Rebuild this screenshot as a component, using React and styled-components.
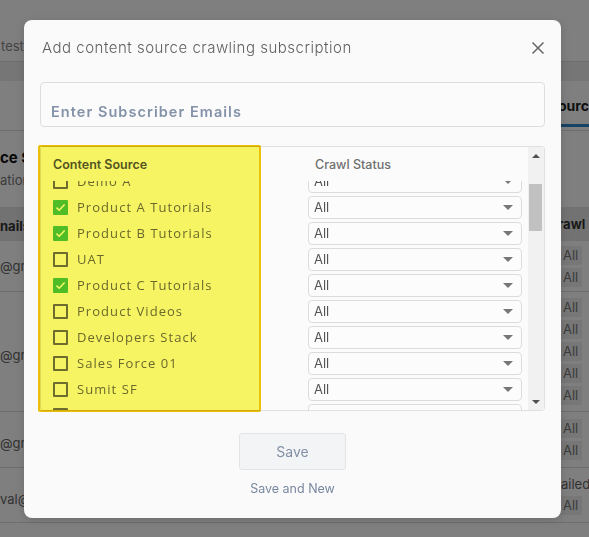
import React, { useLayoutEffect, useRef } from "react";
import styled, { createGlobalStyle } from "styled-components";

const GlobalStyle = createGlobalStyle`
  html, body { margin: 0; padding: 0; width: 100%; height: 100%; overflow: hidden; }
  body { font-family: Inter, "Open Sans", "Liberation Sans", sans-serif; background: #fff; }
  * { box-sizing: border-box; }
`;

/* ---------- background page ---------- */
const Page = styled.div`
  width: 589px;
  height: 537px;
  background: #fff;
  display: flex;
  flex-direction: column;
  overflow: hidden;
`;

const BgRow = styled.div`
  flex: 0 0 ${(p) => p.$h}px;
  display: flex;
  justify-content: space-between;
  background: ${(p) => (p.$band ? p.$band : "transparent")};
  border-bottom: ${(p) => (p.$line ? "1px solid #dcdcdc" : "none")};
`;

const LeftCell = styled.div`
  width: 60px;
  overflow: hidden;
  display: flex;
  flex-direction: column;
  justify-content: center;
  gap: 4px;
  white-space: nowrap;
  padding-top: ${(p) => p.$shift || 0}px;
`;

const RightCell = styled.div`
  width: 33px;
  overflow: hidden;
  display: flex;
  flex-direction: column;
  justify-content: center;
  gap: 3px;
  padding-left: 2px;
  white-space: nowrap;
  position: relative;
`;

const BgText = styled.span`
  font-size: ${(p) => p.$size || 13}px;
  font-weight: ${(p) => p.$weight || 400};
  color: ${(p) => p.$color || "#555"};
  padding-left: ${(p) => p.$pad || 0}px;
  line-height: 18px;
`;

const Chip = styled.span`
  display: block;
  width: 24px;
  height: 19px;
  background: #efefef;
  font-size: 13px;
  color: #777;
  line-height: 19px;
  padding-left: 5px;
`;

const TabLine = styled.div`
  position: absolute;
  left: 0;
  right: 0;
  bottom: 3px;
  height: 3px;
  background: #2e86c8;
`;

const Dim = styled.div`
  position: fixed;
  inset: 0;
  background: rgba(0, 0, 0, 0.5);
`;

/* ---------- modal ---------- */
const Modal = styled.div`
  position: fixed;
  left: 24px;
  top: 20px;
  width: 537px;
  height: 498px;
  background: #fafafa;
  border-radius: 8px;
  padding: 18px 16px 0 16px;
  display: flex;
  flex-direction: column;
  box-shadow: 0 2px 10px rgba(0, 0, 0, 0.15);
`;

const Header = styled.div`
  display: flex;
  align-items: center;
  justify-content: space-between;
  height: 20px;
  padding-left: 2px;
`;

const Title = styled.h2`
  margin: 0;
  font-size: 15px;
  font-weight: 300;
  color: #5f5f5f;
  letter-spacing: 0.5px;
  line-height: 20px;
`;

const CloseBtn = styled.button`
  border: none;
  background: none;
  padding: 0;
  width: 14px;
  height: 14px;
  display: flex;
  cursor: pointer;
`;

const EmailBox = styled.div`
  margin-top: 24px;
  height: 45px;
  border: 1px solid #dedede;
  border-radius: 4px;
  background: #fbfbfb;
  padding: 18px 10px 0 10px;
`;

const Placeholder = styled.span`
  font-size: 14.5px;
  font-weight: 600;
  color: #8392a8;
  letter-spacing: 1.05px;
  line-height: 18px;
`;

const TableWrap = styled.div`
  margin-top: 19px;
  height: 265px;
  border: 1px solid #e0e0e0;
  border-radius: 3px;
  background: #fbfbfb;
  display: flex;
  position: relative;
`;

const TableMain = styled.div`
  flex: 1;
  display: flex;
  flex-direction: column;
  min-width: 0;
`;

const HeadRow = styled.div`
  flex: 0 0 34px;
  display: grid;
  grid-template-columns: 259px 1fr;
  align-items: start;
  padding-top: 9px;
  background: #fbfbfb;
`;

const HeadCell = styled.div`
  font-size: 12.5px;
  font-weight: ${(p) => p.$weight || 600};
  color: ${(p) => p.$color || "#555"};
  padding-left: ${(p) => p.$pad}px;
  line-height: 18px;
`;

const Body = styled.div`
  flex: 1;
  overflow: hidden;
`;

const Row = styled.div`
  height: 26px;
  display: grid;
  grid-template-columns: 259px 1fr;
  align-items: center;
`;

const SourceCell = styled.label`
  display: flex;
  align-items: center;
  gap: 9px;
  padding-left: 12px;
`;

const Box = styled.span`
  width: 15px;
  height: 15px;
  flex: 0 0 15px;
  border-radius: 1px;
  border: ${(p) => (p.$checked ? "none" : "2px solid #707070")};
  background: ${(p) => (p.$checked ? "#52c35e" : "transparent")};
  display: flex;
  align-items: center;
  justify-content: center;
`;

const SourceName = styled.span`
  font-family: "Open Sans", Inter, sans-serif;
  font-size: 13px;
  color: #6c6c6c;
  letter-spacing: 1.05px;
  white-space: nowrap;
`;

const StatusCell = styled.div`
  padding-left: 8px;
  padding-right: 6px;
`;

const Select = styled.div`
  height: 23px;
  border: 1px solid #dcdcdc;
  border-radius: 4px;
  background: #fcfcfc;
  display: flex;
  align-items: center;
  justify-content: space-between;
  padding: 0 8px 0 5px;
  font-size: 13px;
  color: #555;
`;

const Caret = styled.span`
  width: 0;
  height: 0;
  border-left: 5px solid transparent;
  border-right: 5px solid transparent;
  border-top: 5px solid #777;
`;

const ScrollBar = styled.div`
  flex: 0 0 16px;
  background: #f1f1f1;
  display: flex;
  flex-direction: column;
  align-items: center;
`;

const ScrollArrow = styled.div`
  flex: 0 0 17px;
  display: flex;
  align-items: center;
  justify-content: center;
  width: 100%;
`;

const Arrow = styled.span`
  width: 0;
  height: 0;
  border-left: 4px solid transparent;
  border-right: 4px solid transparent;
  ${(p) =>
    p.$up ? "border-bottom: 4px solid #505050;" : "border-top: 4px solid #505050;"}
`;

const Track = styled.div`
  flex: 1;
  width: 100%;
  padding: 20px 2px 0 1px;
`;

const Thumb = styled.div`
  height: 47px;
  background: #c1c1c1;
`;

const Highlight = styled.div`
  position: absolute;
  left: -3px;
  top: -2px;
  bottom: -2px;
  width: 223px;
  border: 2px solid #f0c20a;
  border-radius: 2px;
  background: #fbf865;
  mix-blend-mode: multiply;
  pointer-events: none;
`;

const Footer = styled.div`
  display: flex;
  flex-direction: column;
  align-items: center;
  margin-top: 22px;
  gap: 10px;
`;

const SaveButton = styled.button`
  width: 107px;
  height: 37px;
  border: 1px solid #e4e4e4;
  border-radius: 3px;
  background: #f3f4f6;
  font-family: inherit;
  font-size: 14px;
  color: #8290a5;
`;

const LinkButton = styled.button`
  border: none;
  background: none;
  padding: 0;
  font-family: inherit;
  font-size: 12.5px;
  color: #7887a0;
  margin-top: 1px;
`;

const sources = [
  { name: "Demo A", checked: false },
  { name: "Product A Tutorials", checked: true },
  { name: "Product B Tutorials", checked: true },
  { name: "UAT", checked: false },
  { name: "Product C Tutorials", checked: true },
  { name: "Product Videos", checked: false },
  { name: "Developers Stack", checked: false },
  { name: "Sales Force 01", checked: false },
  { name: "Sumit SF", checked: false },
  { name: "Demo B", checked: false },
  { name: "Demo C", checked: false },
];

function Check() {
  return (
    <svg width="11" height="9" viewBox="0 0 11 9">
      <path d="M1.5 4.6 L4.2 7.2 L9.6 1.6" fill="none" stroke="#fff" strokeWidth="1.5" />
    </svg>
  );
}

export default function App() {
  const bodyRef = useRef(null);
  useLayoutEffect(() => {
    if (bodyRef.current) bodyRef.current.scrollTop = 13;
  }, []);

  return (
    <>
      <GlobalStyle />
      <Page>
        <BgRow $h={30} />
        <BgRow $h={32} $line>
          <LeftCell>
            <BgText $color="#8a8a8a" $pad={1} $size={13}>test</BgText>
          </LeftCell>
        </BgRow>
        <BgRow $h={19} $band="#ececec" />
        <BgRow $h={50} $line>
          <LeftCell />
          <RightCell>
            <BgText $weight={700} $size={14} $color="#222">ource</BgText>
            <TabLine />
          </RightCell>
        </BgRow>
        <BgRow $h={76}>
          <LeftCell>
            <BgText $weight={700} $size={15} $color="#111">ce Su</BgText>
            <BgText $size={13} $color="#777">ation</BgText>
          </LeftCell>
        </BgRow>
        <BgRow $h={34} $band="#e4e4e4">
          <LeftCell $shift={4}>
            <BgText $weight={700} $size={13} $color="#333">nails</BgText>
          </LeftCell>
          <RightCell>
            <BgText $weight={700} $size={13} $color="#333">rawl</BgText>
          </RightCell>
        </BgRow>
        <BgRow $h={51} $line>
          <LeftCell>
            <BgText $color="#666">@gra</BgText>
          </LeftCell>
          <RightCell>
            <Chip>All</Chip>
            <Chip>All</Chip>
          </RightCell>
        </BgRow>
        <BgRow $h={120} $line>
          <LeftCell $shift={6}>
            <BgText $color="#666">@gn</BgText>
          </LeftCell>
          <RightCell>
            <Chip>All</Chip>
            <Chip>All</Chip>
            <Chip>All</Chip>
            <Chip>All</Chip>
            <Chip>All</Chip>
          </RightCell>
        </BgRow>
        <BgRow $h={56} $line>
          <LeftCell $shift={6}>
            <BgText $color="#666">@gn</BgText>
          </LeftCell>
          <RightCell>
            <Chip>All</Chip>
            <Chip>All</Chip>
          </RightCell>
        </BgRow>
        <BgRow $h={55} $line>
          <LeftCell $shift={8}>
            <BgText $color="#666">val@</BgText>
          </LeftCell>
          <RightCell>
            <BgText $color="#666" $pad={3}>ailed</BgText>
            <Chip>All</Chip>
          </RightCell>
        </BgRow>
      </Page>
      <Dim />
      <Modal role="dialog">
        <Header>
          <Title>Add content source crawling subscription</Title>
          <CloseBtn aria-label="Close">
            <svg width="14" height="14" viewBox="0 0 14 14">
              <path d="M1.5 1.5 L12.5 12.5 M12.5 1.5 L1.5 12.5" stroke="#666" strokeWidth="1.5" />
            </svg>
          </CloseBtn>
        </Header>
        <EmailBox>
          <Placeholder>Enter Subscriber Emails</Placeholder>
        </EmailBox>
        <TableWrap>
          <TableMain>
            <HeadRow>
              <HeadCell $pad={12}>Content Source</HeadCell>
              <HeadCell $pad={15} $weight={500} $color="#6f6f6f">Crawl Status</HeadCell>
            </HeadRow>
            <Body ref={bodyRef}>
              {sources.map((s) => (
                <Row key={s.name}>
                  <SourceCell>
                    <Box $checked={s.checked}>{s.checked && <Check />}</Box>
                    <SourceName>{s.name}</SourceName>
                  </SourceCell>
                  <StatusCell>
                    <Select>
                      <span>All</span>
                      <Caret />
                    </Select>
                  </StatusCell>
                </Row>
              ))}
            </Body>
          </TableMain>
          <ScrollBar>
            <ScrollArrow>
              <Arrow $up />
            </ScrollArrow>
            <Track>
              <Thumb />
            </Track>
            <ScrollArrow>
              <Arrow />
            </ScrollArrow>
          </ScrollBar>
          <Highlight />
        </TableWrap>
        <Footer>
          <SaveButton>Save</SaveButton>
          <LinkButton>Save and New</LinkButton>
        </Footer>
      </Modal>
    </>
  );
}
